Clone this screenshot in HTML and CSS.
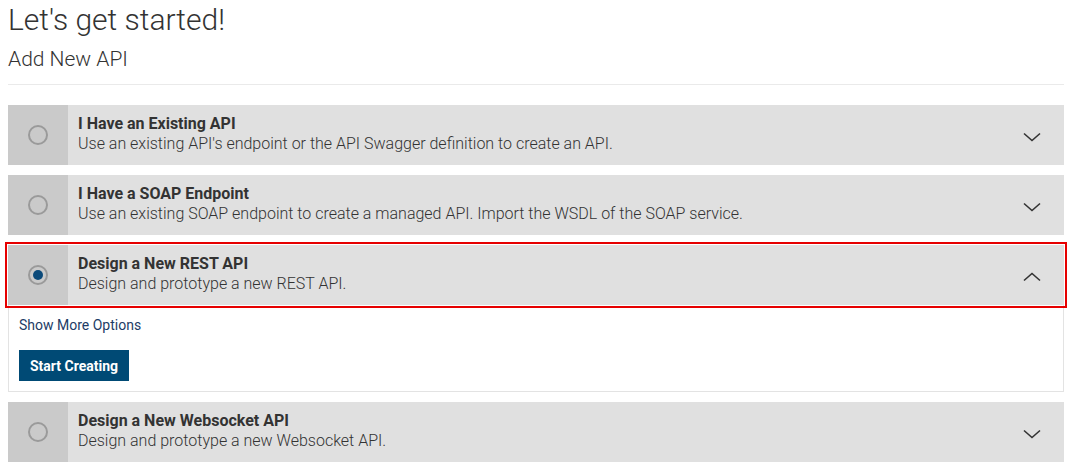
FILE: index.html
```html
<!DOCTYPE html>
<html>
<head>
<meta charset="utf-8">
<link rel="stylesheet" href="styles.css">
</head>
<body>
<div class="page">
  <h1 class="title">Let's get started!</h1>
  <h2 class="subtitle">Add New API</h2>
  <hr class="divider">

  <div class="option">
    <div class="radio-col"><span class="radio"></span></div>
    <div class="option-body">
      <div class="option-title">I Have an Existing API</div>
      <div class="option-desc">Use an existing API's endpoint or the API Swagger definition to create an API.</div>
    </div>
    <div class="chev-col">
      <svg class="chev" width="18" height="10" viewBox="0 0 18 10"><path d="M1 1.5 L9 8.5 L17 1.5" fill="none" stroke="#333" stroke-width="1.6"/></svg>
    </div>
  </div>

  <div class="option">
    <div class="radio-col"><span class="radio"></span></div>
    <div class="option-body">
      <div class="option-title">I Have a SOAP Endpoint</div>
      <div class="option-desc">Use an existing SOAP endpoint to create a managed API. Import the WSDL of the SOAP service.</div>
    </div>
    <div class="chev-col">
      <svg class="chev" width="18" height="10" viewBox="0 0 18 10"><path d="M1 1.5 L9 8.5 L17 1.5" fill="none" stroke="#333" stroke-width="1.6"/></svg>
    </div>
  </div>

  <div class="option option-open">
    <div class="radio-col"><span class="radio radio-on"></span></div>
    <div class="option-body">
      <div class="option-title">Design a New REST API</div>
      <div class="option-desc">Design and prototype a new REST API.</div>
    </div>
    <div class="chev-col">
      <svg class="chev" width="18" height="10" viewBox="0 0 18 10"><path d="M1 8.5 L9 1.5 L17 8.5" fill="none" stroke="#333" stroke-width="1.6"/></svg>
    </div>
  </div>
  <div class="expanded">
    <a class="more-link">Show More Options</a>
    <button class="btn">Start Creating</button>
  </div>

  <div class="option">
    <div class="radio-col"><span class="radio"></span></div>
    <div class="option-body">
      <div class="option-title">Design a New Websocket API</div>
      <div class="option-desc">Design and prototype a new Websocket API.</div>
    </div>
    <div class="chev-col">
      <svg class="chev" width="18" height="10" viewBox="0 0 18 10"><path d="M1 1.5 L9 8.5 L17 1.5" fill="none" stroke="#333" stroke-width="1.6"/></svg>
    </div>
  </div>
</div>
</body>
</html>
```

FILE: styles.css
```css
* { box-sizing: border-box; }
html, body { margin: 0; padding: 0; background: #fff; }
body {
  font-family: Roboto, "Liberation Sans", sans-serif;
  color: #333;
  overflow: hidden;
}
.page {
  width: 1056px;
  margin-left: 8px;
  padding-top: 2px;
}
.title {
  margin: 0;
  font-size: 30px;
  font-weight: 300;
  line-height: 36px;
  color: #333;
}
.subtitle {
  margin: 8px 0 0 0;
  font-size: 21px;
  font-weight: 300;
  line-height: 26px;
  color: #333;
}
.divider {
  margin: 12px 0 20px 0;
  border: 0;
  border-top: 1px solid #eaeaea;
  height: 0;
}
.option {
  display: flex;
  height: 60px;
  background: #e0e0e0;
  margin-bottom: 10px;
}
.radio-col {
  width: 60px;
  background: #cacaca;
  display: flex;
  align-items: center;
  justify-content: center;
}
.radio {
  width: 20px;
  height: 20px;
  border-radius: 50%;
  border: 2px solid #9a9a9a;
  display: flex;
  align-items: center;
  justify-content: center;
}
.radio-on::after {
  content: "";
  width: 10px;
  height: 10px;
  border-radius: 50%;
  background: #0b4a7a;
}
.option-body {
  flex: 1;
  padding: 10px 0 0 10px;
}
.option-title {
  font-size: 16px;
  font-weight: 700;
  line-height: 18px;
  color: #333;
}
.option-desc {
  font-size: 16px;
  font-weight: 300;
  line-height: 21px;
  color: #333;
}
.chev-col {
  width: 64px;
  display: flex;
  align-items: center;
  justify-content: center;
  padding-top: 4px;
}
.chev { display: block; }
.option-open {
  margin-bottom: 0;
  outline: 2px solid #e60000;
  outline-offset: 1px;
}
.expanded {
  border: 1px solid #e3e3e3;
  border-top: 0;
  padding: 12px 10px 10px 10px;
  margin-bottom: 10px;
  display: flex;
  flex-direction: column;
  align-items: flex-start;
}
.more-link {
  font-size: 14px;
  line-height: 16px;
  color: #1d3c66;
  font-weight: 400;
}
.btn {
  margin-top: 17px;
  width: 110px;
  height: 31px;
  border: 0;
  background: #004a75;
  color: #fff;
  font-family: Roboto, "Liberation Sans", sans-serif;
  font-size: 14px;
  font-weight: 700;
  padding: 0;
}
```
